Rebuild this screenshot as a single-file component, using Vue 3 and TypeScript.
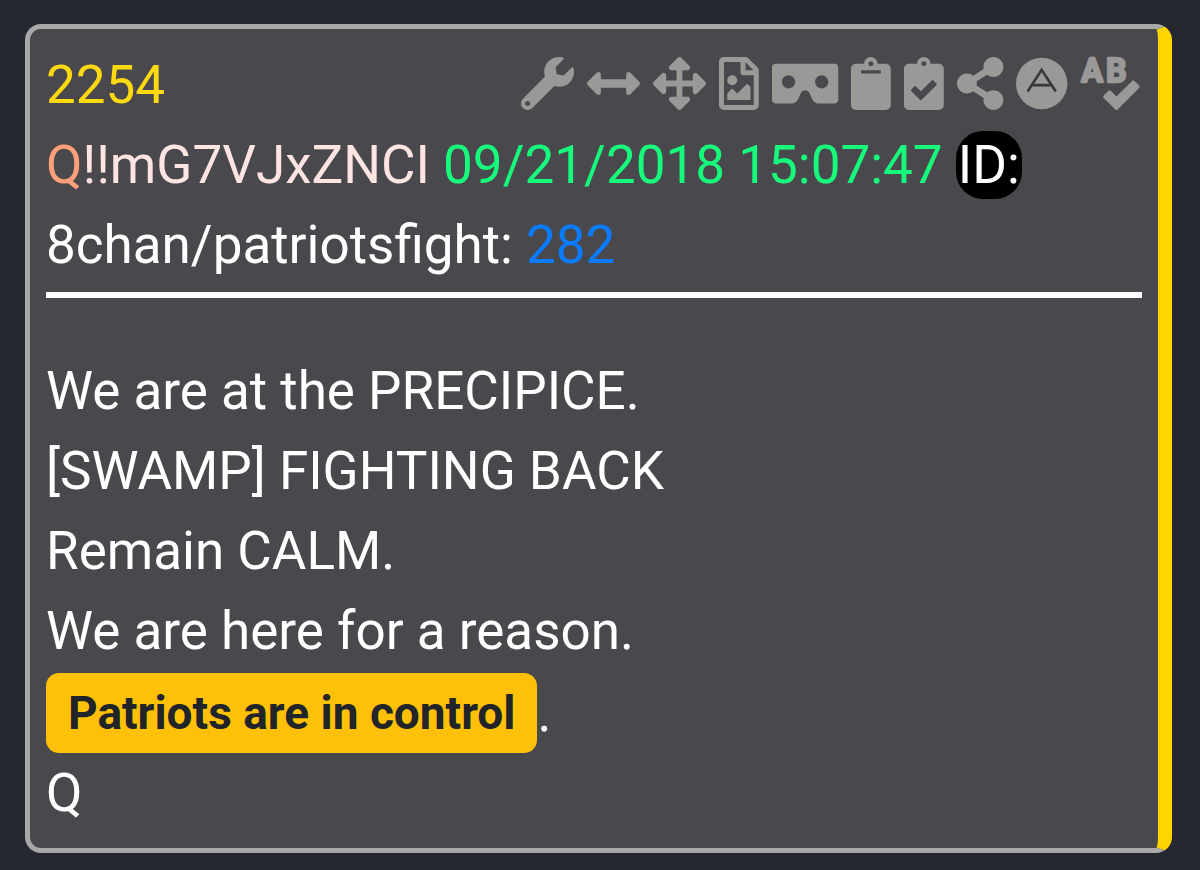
<script setup lang="ts">
interface Action {
  label: string
  width: number
  path: string
}

const actions: Action[] = [
  {
    label: 'Tools',
    width: 512,
    path: 'M507.73 109.1c-2.24-9.03-13.54-12.09-20.12-5.51l-74.36 74.36-67.88-11.31-11.31-67.88 74.36-74.36c6.62-6.62 3.43-17.9-5.66-20.16-47.38-11.74-99.55.91-136.58 37.93-39.64 39.64-50.55 97.1-34.05 147.2L18.74 402.76c-24.99 24.99-24.99 65.51 0 90.5 24.99 24.99 65.51 24.99 90.5 0l213.21-213.21c50.12 16.71 107.47 5.68 147.37-34.22 37.07-37.07 49.7-89.32 37.91-136.73zM64 472c-13.25 0-24-10.75-24-24 0-13.26 10.75-24 24-24s24 10.74 24 24c0 13.25-10.75 24-24 24z',
  },
  {
    label: 'Widen',
    width: 512,
    path: 'M377.941 169.941V216H134.059v-46.059c0-21.382-25.851-32.09-40.971-16.971L7.029 239.029c-9.373 9.373-9.373 24.568 0 33.941l86.059 86.059c15.119 15.119 40.971 4.411 40.971-16.971V296h243.882v46.059c0 21.382 25.851 32.09 40.971 16.971l86.059-86.059c9.373-9.373 9.373-24.568 0-33.941l-86.059-86.059c-15.119-15.12-40.971-4.412-40.971 16.97z',
  },
  {
    label: 'Expand',
    width: 512,
    path: 'M352.201 425.775l-79.196 79.196c-9.373 9.373-24.568 9.373-33.941 0l-79.196-79.196c-15.119-15.119-4.411-40.971 16.971-40.97h51.162L228 284H127.196v51.162c0 21.382-25.851 32.09-40.971 16.971L7.029 272.937c-9.373-9.373-9.373-24.569 0-33.941L86.225 159.8c15.119-15.119 40.971-4.411 40.971 16.971V228H228V127.196h-51.23c-21.382 0-32.09-25.851-16.971-40.971l79.196-79.196c9.373-9.373 24.568-9.373 33.941 0l79.196 79.196c15.119 15.119 4.411 40.971-16.971 40.971h-51.162V228h100.804v-51.162c0-21.382 25.851-32.09 40.97-16.971l79.196 79.196c9.373 9.373 9.373 24.569 0 33.941L425.773 352.2c-15.119 15.119-40.971 4.411-40.97-16.971V284H284v100.804h51.23c21.382 0 32.09 25.851 16.971 40.971z',
  },
  {
    label: 'Image',
    width: 384,
    path: 'M369.9 97.9L286 14C277 5 264.8-.1 252.1-.1H48C21.5 0 0 21.5 0 48v416c0 26.5 21.5 48 48 48h288c26.5 0 48-21.5 48-48V131.9c0-12.7-5.1-25-14.1-34zM332.1 128H256V51.9l76.1 76.1zM48 464V48h160v104c0 13.3 10.7 24 24 24h104v288H48zm32-48h224V288l-23.5-23.5c-4.7-4.7-12.3-4.7-17 0L176 352l-39.5-39.5c-4.7-4.7-12.3-4.7-17 0L80 352v64zm48-240c-26.5 0-48 21.5-48 48s21.5 48 48 48 48-21.5 48-48-21.5-48-48-48z',
  },
  {
    label: 'Viewer',
    width: 640,
    path: 'M608 64H32C14.33 64 0 78.33 0 96v320c0 17.67 14.33 32 32 32h160.22c25.19 0 48.03-14.77 58.36-37.74l27.74-61.64C286.21 331.08 302.35 320 320 320s33.79 11.08 41.68 28.62l27.74 61.64C399.75 433.23 422.6 448 447.78 448H608c17.67 0 32-14.33 32-32V96c0-17.67-14.33-32-32-32zM160 304c-35.35 0-64-28.65-64-64s28.65-64 64-64 64 28.65 64 64-28.65 64-64 64zm320 0c-35.35 0-64-28.65-64-64s28.65-64 64-64 64 28.65 64 64-28.65 64-64 64z',
  },
  {
    label: 'Copy',
    width: 384,
    path: 'M384 112v352c0 26.51-21.49 48-48 48H48c-26.51 0-48-21.49-48-48V112c0-26.51 21.49-48 48-48h80c0-35.29 28.71-64 64-64s64 28.71 64 64h80c26.51 0 48 21.49 48 48zM192 40c-13.255 0-24 10.745-24 24s10.745 24 24 24 24-10.745 24-24-10.745-24-24-24m96 114v-20a6 6 0 0 0-6-6H102a6 6 0 0 0-6 6v20a6 6 0 0 0 6 6h180a6 6 0 0 0 6-6z',
  },
  {
    label: 'Select',
    width: 384,
    path: 'M336 64h-80c0-35.3-28.7-64-64-64s-64 28.7-64 64H48C21.5 64 0 85.5 0 112v352c0 26.5 21.5 48 48 48h288c26.5 0 48-21.5 48-48V112c0-26.5-21.5-48-48-48zM192 40c13.3 0 24 10.7 24 24s-10.7 24-24 24-24-10.7-24-24 10.7-24 24-24zm121.2 231.8l-143 141.8c-4.7 4.7-12.3 4.6-17-.1l-82.6-83.3c-4.7-4.7-4.6-12.3.1-17L99.1 285c4.7-4.7 12.3-4.6 17 .1l46 46.4 106-105.2c4.7-4.7 12.3-4.6 17 .1l28.2 28.4c4.7 4.8 4.6 12.3-.1 17z',
  },
  {
    label: 'Share',
    width: 448,
    path: 'M352 320c-22.608 0-43.387 7.819-59.79 20.895l-102.486-64.054a96.551 96.551 0 0 0 0-41.683l102.486-64.054C308.613 184.181 329.392 192 352 192c53.019 0 96-42.981 96-96S405.019 0 352 0s-96 42.981-96 96c0 7.158.79 14.13 2.276 20.841L155.79 180.895C139.387 167.819 118.608 160 96 160c-53.019 0-96 42.981-96 96s42.981 96 96 96c22.608 0 43.387-7.819 59.79-20.895l102.486 64.054A96.301 96.301 0 0 0 256 416c0 53.019 42.981 96 96 96s96-42.981 96-96-42.981-96-96-96z',
  },
]

const lines: string[] = [
  'We are at the PRECIPICE.',
  '[SWAMP] FIGHTING BACK',
  'Remain CALM.',
  'We are here for a reason.',
]
</script>

<template>
  <main class="page">
    <article class="card">
      <header class="head">
        <div class="top">
          <a class="number" href="#2254">2254</a>
          <div class="actions">
            <button v-for="a in actions" :key="a.label" type="button" :aria-label="a.label">
              <svg :viewBox="`0 0 ${a.width} 512`"><path :d="a.path" /></svg>
            </button>
            <button type="button" aria-label="Archive">
              <svg viewBox="0 0 496 512">
                <circle cx="248" cy="256" r="248" />
                <path class="mark" d="M112 334L248 124L384 334M156 272H340" />
              </svg>
            </button>
            <button type="button" aria-label="Spell check">
              <svg viewBox="0 0 576 512">
                <text class="letters" x="12" y="240">A</text>
                <text class="letters" x="252" y="240">B</text>
                <path d="M571.37 276.48l-45.21-45.3a15.88 15.88 0 0 0-22.59 0l-151.5 151.5-55.41-55.5a15.88 15.88 0 0 0-22.59 0l-45.3 45.3a16 16 0 0 0 0 22.59l112 112.21a15.89 15.89 0 0 0 22.6 0l208-208.21a16 16 0 0 0 0-22.59z" />
              </svg>
            </button>
          </div>
        </div>
        <div class="meta">
          <span class="name">Q</span><span class="trip">!!mG7VJxZNCI</span>
          {{ ' ' }}<time class="time" datetime="2018-09-21T15:07:47">09/21/2018 15:07:47</time>
          {{ ' ' }}<span class="id">ID:</span>
        </div>
        <div>8chan/patriotsfight: <a class="ref" href="#282">282</a></div>
      </header>
      <div class="body">
        <p v-for="line in lines" :key="line">{{ line }}</p>
        <p class="tagged"><strong class="badge">Patriots are in control</strong>.</p>
        <p>Q</p>
      </div>
    </article>
  </main>
</template>

<style>
body {
  margin: 0;
  background: #252731;
}
</style>

<style scoped>
.page {
  box-sizing: border-box;
  min-height: 100vh;
  padding: 24px 28px 17px 25px;
  background: #252731;
  color: #fff;
  font: 400 53px/80px Roboto, sans-serif;
}
.card {
  box-sizing: border-box;
  padding: 16px 16px 15px;
  border: 5px solid #a9a8a8;
  border-right: 14px solid #ffd500;
  border-radius: 16px;
  background: #49494d;
}
.head {
  padding-bottom: 7px;
  border-bottom: 6px solid #fff;
}
.top {
  display: flex;
  justify-content: space-between;
}
a {
  text-decoration: none;
}
.number {
  color: #ffd90f;
}
.actions {
  display: flex;
  align-items: flex-start;
  gap: 13px;
  padding: 12px 2px 0 0;
}
button {
  display: block;
  padding: 0;
  border: 0;
  background: none;
  color: #9b9898;
  cursor: pointer;
}
svg {
  display: block;
  height: 53px;
  overflow: visible;
  fill: currentColor;
}
.mark {
  fill: none;
  stroke: #38383b;
  stroke-width: 25;
}
.letters {
  font: 700 312px Roboto, sans-serif;
  stroke: currentColor;
  stroke-width: 22;
  stroke-linejoin: round;
}
.name {
  color: #ffa07a;
}
.trip {
  color: #ffe4e1;
}
.time {
  color: #17fb7c;
}
.id {
  padding: 3px 2px;
  border-radius: 27px;
  background: #000;
}
.ref {
  color: #0b7bff;
}
.body {
  padding-top: 53px;
}
p {
  margin: 0;
}
.tagged {
  display: flex;
  margin-top: 2px;
}
.badge {
  padding: 0 22px;
  border-radius: 13px;
  background: #ffc107;
  color: #212529;
  font-size: 46px;
  font-weight: 700;
}
</style>
